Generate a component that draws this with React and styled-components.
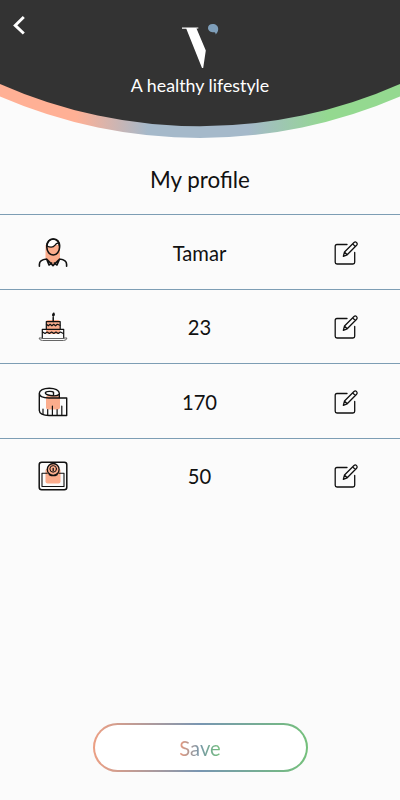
import React from "react";
import styled, { createGlobalStyle } from "styled-components";

const GlobalStyle = createGlobalStyle`
  * {
    box-sizing: border-box;
  }
  body {
    margin: 0;
    background-color: #fbfbfb;
    font-family: Lato, "Liberation Sans", sans-serif;
  }
`;

const Screen = styled.div`
  width: 400px;
  height: 800px;
  display: flex;
  flex-direction: column;
  overflow: hidden;
  color: #111;
`;

const Header = styled.header`
  position: relative;
  height: 138px;
  display: flex;
  flex-direction: column;
  align-items: center;
  padding-top: 22px;
`;

const Curve = styled.svg`
  position: absolute;
  top: 0;
  left: 0;
  z-index: -1;
`;

const BackButton = styled.button`
  position: absolute;
  top: 12px;
  left: 8px;
  width: 24px;
  height: 27px;
  padding: 0;
  border: none;
  background: none;
  cursor: pointer;
`;

const Logo = styled.svg`
  display: block;
  width: 40px;
  height: 48px;
`;

const Slogan = styled.p`
  margin: 3px 0 0;
  font-size: 17.8px;
  line-height: 24px;
  color: #fff;
`;

const Title = styled.h1`
  margin: 27px 0 19.4px;
  font-size: 22.4px;
  font-weight: 400;
  line-height: 30px;
  text-align: center;
`;

const List = styled.div`
  display: flex;
  flex-direction: column;
`;

const Row = styled.div`
  height: 74.5px;
  display: grid;
  grid-template-columns: 30px 1fr 26px;
  align-items: center;
  padding: 1px 41px 0 38px;
  border-top: 1px solid #7d9db4;
`;

const Value = styled.span`
  font-size: 20.2px;
  line-height: 28px;
  text-align: center;
  padding-right: 2px;
`;

const EditButton = styled.button`
  width: 26px;
  height: 26px;
  padding: 0;
  border: none;
  background: none;
  cursor: pointer;
`;

const Icon = styled.svg`
  display: block;
  fill: none;
  stroke: #111;
  stroke-width: ${(props) => props.$line || 1.4};
  stroke-linecap: round;
  stroke-linejoin: round;
`;

const SaveButton = styled.button`
  align-self: center;
  width: 215px;
  height: 49px;
  margin-top: auto;
  margin-bottom: 28px;
  border: 2px solid transparent;
  border-radius: 25px;
  background: linear-gradient(#fff, #fff) padding-box,
              linear-gradient(90deg, #ec9f83, #7896b2 50%, #74c07b) border-box;
  font-family: inherit;
  font-size: 20.2px;
  cursor: pointer;
`;

const SaveText = styled.span`
  color: transparent;
  background: linear-gradient(90deg, #ec9a7d, #7896a8 48%, #74c07b);
  background-clip: text;
  -webkit-background-clip: text;
`;

const PersonIcon = () => (
  <Icon width="30" height="30" viewBox="0 0 30 30" $line="1.6">
    <path d="M7.5 7H22V20.5Q19 22.5 15 27Q11 22.5 7.5 20.5Z" fill="#fbac8c" stroke="none" />
    <path d="M8.8 8C8.8 3.5 11.5 1 15.2 1S21.6 3.5 21.6 8L20.8 5.2C18.6 4.6 18 5.6 17 7.2C15.5 9.3 12 9.5 8.8 8Z" fill="#fff" strokeWidth="1.3" />
    <ellipse cx="15.2" cy="9" rx="6.4" ry="8" />
    <path d="M1.4 28.3V26.3C1.4 23 4 21.6 8.6 21L15 27.6L21.6 21C26 21.6 28.6 23 28.6 26.3V28.3M8.6 21L11 27L13.6 25M21.6 21L19 27L16.4 25" />
  </Icon>
);

const CakeIcon = () => (
  <Icon width="30" height="30" viewBox="0 0 30 30" $line="1.2">
    <rect x="8" y="8" width="14" height="14" rx="2" fill="#fbac8c" stroke="none" />
    <path d="M15.2 9.5V5.5M15.2 4Q14.2 3 15.7 1.2Q16.8 3 15.2 4Z" strokeWidth="1.5" />
    <path d="M8.3 17V9.7H22.2V17M4.3 26.5V17.3H25.7V26.5" />
    <path d="M8.5 12.3L10.3 13.8L12.1 12.3L13.9 13.8L15.7 12.3L17.5 13.8L19.3 12.3L22 13.3M4.6 20L7 21.5L9.2 20L11.4 21.5L13.6 20L15.8 21.5L18 20L20.2 21.5L22.4 20L25.3 21.5" />
    <path d="M4 26H1Q1.5 28.5 4.5 28.5H25.5Q28.5 28.5 29 26H26M4.5 26.5H25.5" stroke="#666" strokeWidth="1" />
  </Icon>
);

const TapeIcon = () => (
  <Icon width="30" height="30" viewBox="0 0 30 30">
    <rect x="8" y="8.5" width="14" height="14" rx="2" fill="#fbac8c" stroke="none" />
    <path d="M1.3 6.3C1.3 3.3 5.5 1.2 11.3 1.2S21.3 3.3 21.3 6.3V10.8M1.3 6.3C1.3 9.5 5.5 11 11 11H28.7V28.5H11C5 28.5 1.3 26.5 1.3 23.5Z" />
    <path d="M21 7.5C19.5 9 15.5 9 12.5 8.5C9 8 7 7 7.4 5.8C8 4 14.5 4 15.5 5.3V8.5" />
    <path d="M5 27V22M9.7 28V22.5M14.4 28V19M19.1 28V22.5M23.8 28V19" strokeWidth="1.2" />
  </Icon>
);

const ScaleIcon = () => (
  <Icon width="30" height="30" viewBox="0 0 30 30" $line="1.5">
    <rect x="7.5" y="7.5" width="15" height="15" rx="2" fill="#fbac8c" stroke="none" />
    <rect x="1.2" y="1.2" width="27.6" height="27.6" rx="2.5" />
    <path d="M9.2 12.3H4V25.5H26V12.3H20.8" strokeWidth="1.1" />
    <circle cx="15.2" cy="8.4" r="5.9" fill="#fbac8c" strokeWidth="1.3" />
    <circle cx="15.2" cy="7.9" r="3.3" strokeWidth="1" />
    <path d="M15.2 7.5V9.8" strokeWidth="1.3" />
    <path d="M11.2 13.6Q15.2 15.8 19.2 13.6" strokeWidth="1.2" />
  </Icon>
);

const EditIcon = () => (
  <Icon width="26" height="26" viewBox="0 0 26 26" $line="1.3">
    <path d="M14 4.5H4Q2.2 4.5 2.2 6.3V22.2Q2.2 24 4 24H20Q21.7 24 21.7 22.2V12.5" />
    <path d="M10.3 16.3L11.5 12L21 2.5Q22.3 1.3 23.6 2.6Q24.8 3.9 23.6 5.2L14.2 14.8ZM19.7 3.9L22.3 6.5M11.5 12L14.2 14.8" />
  </Icon>
);

const rows = [
  { name: "name", icon: <PersonIcon />, value: "Tamar" },
  { name: "age", icon: <CakeIcon />, value: "23" },
  { name: "height", icon: <TapeIcon />, value: "170" },
  { name: "weight", icon: <ScaleIcon />, value: "50" },
];

const App = () => {
  return (
    <Screen>
      <GlobalStyle />
      <Header>
        <Curve width="400" height="138" viewBox="0 0 400 138">
          <defs>
            <linearGradient id="rim">
              <stop offset="0.19" stopColor="#ffb095" />
              <stop offset="0.37" stopColor="#a5b9ca" />
              <stop offset="0.62" stopColor="#a5b9ca" />
              <stop offset="0.82" stopColor="#94d990" />
            </linearGradient>
          </defs>
          <path d="M0 0H400V96.5A504 504 0 0 1 0 96.5Z" fill="url(#rim)" />
          <path d="M0 0H400V84A494 494 0 0 1 0 84Z" fill="#333" />
        </Curve>
        <BackButton>
          <Icon width="24" height="27" viewBox="0 0 24 27">
            <path d="M15.8 5L7.2 13.4L15.8 21.5" stroke="#fff" strokeWidth="2.9" strokeLinecap="butt" strokeLinejoin="miter" />
          </Icon>
        </BackButton>
        <Logo viewBox="0 0 40 48">
          <path d="M2 5.6H18.3V6.5H16.5L25.8 28.5L23.2 46H22L6.3 6.7H2Z" fill="#fff" />
          <path d="M28 6C28 3.5 30 2 32.5 2C36 2 38.2 4 38.2 7C38.2 9 37.3 11 35.6 12.5Q35.8 10.8 34.5 10.3C31 10.5 28 9 28 6Z" fill="#7f9fba" />
        </Logo>
        <Slogan>A healthy lifestyle</Slogan>
      </Header>
      <Title>My profile</Title>
      <List>
        {rows.map((row) => (
          <Row key={row.name}>
            {row.icon}
            <Value>{row.value}</Value>
            <EditButton>
              <EditIcon />
            </EditButton>
          </Row>
        ))}
      </List>
      <SaveButton>
        <SaveText>Save</SaveText>
      </SaveButton>
    </Screen>
  );
};

export default App;
